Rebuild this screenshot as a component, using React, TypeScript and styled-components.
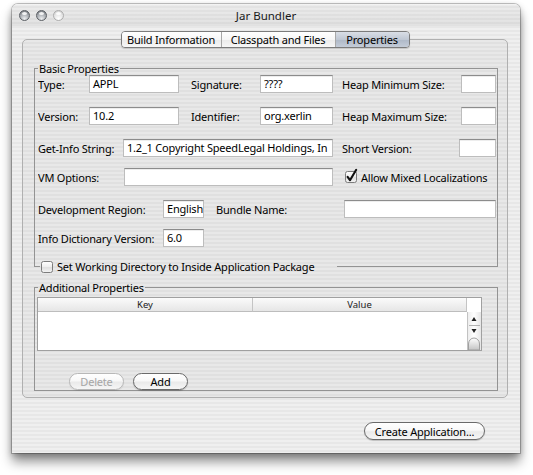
import React from "react";
import styled, { createGlobalStyle } from "styled-components";

const LINE = "#939393";
const PIN =
  "repeating-linear-gradient(180deg, #efefef 0px, #efefef 2px, #e7e7e7 2px, #e7e7e7 4px)";

const GlobalStyle = createGlobalStyle`
  html, body { margin: 0; padding: 0; background: #ffffff; }
  body {
    font-family: "Noto Sans", "DejaVu Sans", sans-serif;
    font-size: 11px;
    letter-spacing: -0.2px;
    color: #000;
  }
  *, *::before, *::after { box-sizing: border-box; }
`;

const Stage = styled.div`
  width: 533px;
  height: 475px;
  padding: 4px 13px 0 12px;
  overflow: hidden;
`;

const Window = styled.div`
  width: 508px;
  height: 449px;
  display: flex;
  flex-direction: column;
  background: ${PIN};
  border-radius: 6px 6px 0 0;
  box-shadow: 0 0 0 1px rgba(0, 0, 0, 0.22), 0 9px 12px rgba(0, 0, 0, 0.42),
    0 2px 6px rgba(0, 0, 0, 0.25);
`;

const TitleBar = styled.div`
  height: 22px;
  display: grid;
  grid-template-columns: 1fr auto 1fr;
  align-items: center;
  padding: 0 7px;
  border-radius: 6px 6px 0 0;
  background: linear-gradient(180deg, rgba(255, 255, 255, 0.7) 0, rgba(255, 255, 255, 0) 1px),
    linear-gradient(180deg, rgba(0, 0, 0, 0.01), rgba(0, 0, 0, 0.06)), ${PIN};
`;

const Lights = styled.div`
  display: flex;
  gap: 6px;
`;

const Light = styled.span<{ $dim?: boolean }>`
  position: relative;
  width: 11px;
  height: 11px;
  border-radius: 50%;
  border: 1px solid ${(p) => (p.$dim ? "#adadad" : "#5c6065")};
  background: ${(p) =>
    p.$dim
      ? "radial-gradient(circle at 50% 85%, #ffffff 0, #e2e2e2 60%, #cfcfcf 100%)"
      : "radial-gradient(circle at 50% 85%, #eceef0 0, #a6aaaf 55%, #6c7075 100%)"};
  &::after {
    content: "";
    position: absolute;
    left: 2px;
    top: 1px;
    width: 5px;
    height: 3px;
    border-radius: 50%;
    background: rgba(255, 255, 255, 0.85);
  }
`;

const Title = styled.div`
  font-size: 11.5px;
  letter-spacing: 0;
  color: #1a1a1a;
  text-align: center;
`;

const Content = styled.div`
  flex: 1;
  display: flex;
  flex-direction: column;
  padding: 5px 12px 0 10px;
`;

const Tabs = styled.div`
  align-self: center;
  position: relative;
  z-index: 1;
  display: flex;
  height: 17px;
  border: 1px solid #7b7b7b;
  border-radius: 4px;
  overflow: hidden;
  box-shadow: 0 1px 1px rgba(0, 0, 0, 0.15);
`;

const Tab = styled.div<{ $w: number; $active?: boolean }>`
  width: ${(p) => p.$w}px;
  display: flex;
  align-items: center;
  justify-content: center;
  white-space: nowrap;
  border-left: 1px solid #a8a8a8;
  &:first-child {
    border-left: none;
  }
  background: ${(p) =>
    p.$active
      ? "linear-gradient(180deg, #d9dee6 0%, #bfc7d3 50%, #aeb8c7 51%, #c4ccd8 100%)"
      : "linear-gradient(180deg, #ffffff 0%, #f6f6f6 50%, #ebebeb 51%, #f7f7f7 100%)"};
`;

const Panel = styled.div`
  margin-top: -9px;
  height: 359px;
  border: 1px solid #b0b0b0;
  border-radius: 5px;
  background: rgba(0, 0, 0, 0.028);
  padding: 22px 9px 0 11px;
  display: flex;
  flex-direction: column;
`;

const Group = styled.div<{ $mt?: number }>`
  display: flex;
  flex-direction: column;
  margin-top: ${(p) => p.$mt ?? 0}px;
`;

const GroupHead = styled.div`
  display: flex;
  height: 13px;
  line-height: 13px;
`;

const HeadCapStart = styled.span`
  width: 4px;
  height: 7px;
  align-self: flex-end;
  border-left: 1px solid ${LINE};
  border-top: 1px solid ${LINE};
`;

const HeadTitle = styled.span`
  padding: 0 1px;
  white-space: nowrap;
`;

const HeadCapEnd = styled.span`
  flex: 1;
  height: 7px;
  align-self: flex-end;
  border-right: 1px solid ${LINE};
  border-top: 1px solid ${LINE};
`;

const GroupBody = styled.div<{ $closed?: boolean; $pl: number; $pb: number }>`
  display: flex;
  flex-direction: column;
  border-left: 1px solid ${LINE};
  border-right: 1px solid ${LINE};
  border-bottom: ${(p) => (p.$closed ? `1px solid ${LINE}` : "none")};
  padding-left: ${(p) => p.$pl}px;
  padding-bottom: ${(p) => p.$pb}px;
`;

const GroupFoot = styled.div`
  display: flex;
  align-items: center;
  height: 13px;
`;

const FootCapStart = styled.span`
  width: 6px;
  height: 7px;
  align-self: flex-start;
  border-left: 1px solid ${LINE};
  border-bottom: 1px solid ${LINE};
`;

const FootCapEnd = styled.span`
  flex: 1;
  height: 7px;
  align-self: flex-start;
  border-right: 1px solid ${LINE};
  border-bottom: 1px solid ${LINE};
`;

const Row = styled.div<{ $mt?: number }>`
  display: flex;
  align-items: center;
  height: 18px;
  margin-top: ${(p) => p.$mt ?? 0}px;
`;

const Label = styled.span<{ $w?: number; $ml?: number }>`
  flex-shrink: 0;
  white-space: nowrap;
  width: ${(p) => (p.$w ? `${p.$w}px` : "auto")};
  margin-left: ${(p) => p.$ml ?? 0}px;
  overflow: hidden;
`;

const TextBox = styled.div<{ $w: number }>`
  flex-shrink: 0;
  width: ${(p) => p.$w}px;
  height: 18px;
  background: #ffffff;
  border: 1px solid #bdbdbd;
  border-top-color: #8c8c8c;
  box-shadow: inset 0 1px 0 rgba(0, 0, 0, 0.07);
  padding: 0 3px;
  line-height: 16px;
  white-space: nowrap;
  overflow: hidden;
`;

const CheckSvg = styled.svg<{ $ml?: number }>`
  flex-shrink: 0;
  overflow: visible;
  margin-left: ${(p) => p.$ml ?? 0}px;
`;

const CheckLabel = styled.span<{ $w?: number }>`
  margin-left: 4px;
  white-space: nowrap;
  width: ${(p) => (p.$w ? `${p.$w}px` : "auto")};
  flex-shrink: 0;
`;

const Table = styled.div`
  margin-top: 3px;
  width: 445px;
  height: 54px;
  border: 1px solid #a0a0a0;
  background: #ffffff;
  display: grid;
  grid-template-columns: 215px 214px 14px;
  grid-template-rows: 14px 1fr;
`;

const HeadCell = styled.div`
  display: flex;
  align-items: center;
  justify-content: center;
  font-size: 9.5px;
  letter-spacing: 0;
  color: #222;
  background: linear-gradient(180deg, #fbfbfb 0%, #f0f0f0 50%, #e6e6e6 100%);
  border-bottom: 1px solid #bdbdbd;
  border-right: 1px solid #c4c4c4;
`;

const CornerCell = styled.div`
  background: #ffffff;
`;

const BodyCell = styled.div`
  background: #ffffff;
`;

const ButtonRow = styled.div`
  display: flex;
  gap: 9px;
  margin-top: 22px;
  padding-left: 32px;
`;

const AquaButton = styled.div<{ $w: number; $h?: number; $disabled?: boolean }>`
  width: ${(p) => p.$w}px;
  height: ${(p) => p.$h ?? 17}px;
  border-radius: 10px;
  display: flex;
  align-items: center;
  justify-content: center;
  white-space: nowrap;
  border: 1px solid ${(p) => (p.$disabled ? "#b8b8b8" : "#6a6a6a")};
  color: ${(p) => (p.$disabled ? "#a6a6a6" : "#000000")};
  background: linear-gradient(180deg, #ffffff 0%, #f8f8f8 45%, #eaeaea 55%, #f6f6f6 100%);
  box-shadow: 0 1px 1px rgba(0, 0, 0, ${(p) => (p.$disabled ? 0.08 : 0.2)});
`;

const Footer = styled.div`
  display: flex;
  justify-content: flex-end;
  margin-top: 24px;
  padding-right: 23px;
`;

function CheckBox({ checked, ml }: { checked?: boolean; ml?: number }) {
  const id = checked ? "cbg-on" : "cbg-off";
  return (
    <CheckSvg width="12" height="12" viewBox="0 0 12 12" $ml={ml}>
      <defs>
        <linearGradient id={id} x1="0" y1="0" x2="0" y2="1">
          <stop offset="0" stopColor="#ffffff" />
          <stop offset="0.5" stopColor="#eeeeee" />
          <stop offset="0.55" stopColor="#e0e0e0" />
          <stop offset="1" stopColor="#f4f4f4" />
        </linearGradient>
      </defs>
      <rect x="0.5" y="0.5" width="11" height="11" rx="2" fill={`url(#${id})`} stroke="#7c7c7c" />
      {checked && (
        <path
          d="M2.6 5.8 L5 9.2 L11.2 -1.2"
          stroke="#111"
          strokeWidth="2.1"
          fill="none"
          strokeLinecap="round"
          strokeLinejoin="round"
        />
      )}
    </CheckSvg>
  );
}

function ScrollBar() {
  return (
    <svg width="14" height="38" viewBox="0 0 14 38">
      <defs>
        <linearGradient id="sbg" x1="0" y1="0" x2="1" y2="0">
          <stop offset="0" stopColor="#eaeaea" />
          <stop offset="0.5" stopColor="#ffffff" />
          <stop offset="1" stopColor="#e6e6e6" />
        </linearGradient>
        <linearGradient id="thumb" x1="0" y1="0" x2="0" y2="1">
          <stop offset="0" stopColor="#ffffff" />
          <stop offset="1" stopColor="#c4c4c4" />
        </linearGradient>
      </defs>
      <rect x="0" y="0" width="14" height="38" fill="url(#sbg)" />
      <line x1="0.5" y1="0" x2="0.5" y2="38" stroke="#c2c2c2" />
      <path d="M4.5 9 L7 5 L9.5 9 Z" fill="#222" />
      <line x1="2" y1="13.5" x2="13" y2="13.5" stroke="#b4b4b4" />
      <path d="M4.5 17 L9.5 17 L7 21 Z" fill="#222" />
      <path d="M1.5 38 L1.5 32 A5.5 6 0 0 1 12.5 32 L12.5 38 Z" fill="url(#thumb)" stroke="#a0a0a0" />
    </svg>
  );
}

export default function App() {
  return (
    <>
      <GlobalStyle />
      <Stage>
        <Window>
          <TitleBar>
            <Lights>
              <Light />
              <Light />
              <Light $dim />
            </Lights>
            <Title>Jar Bundler</Title>
            <span />
          </TitleBar>
          <Content>
            <Tabs>
              <Tab $w={99}>Build Information</Tab>
              <Tab $w={114}>Classpath and Files</Tab>
              <Tab $w={74} $active>
                Properties
              </Tab>
            </Tabs>
            <Panel>
              <Group>
                <GroupHead>
                  <HeadCapStart />
                  <HeadTitle>Basic Properties</HeadTitle>
                  <HeadCapEnd />
                </GroupHead>
                <GroupBody $pl={3} $pb={13}>
                  <Row>
                    <Label $w={51}>Type:</Label>
                    <TextBox $w={90}>APPL</TextBox>
                    <Label $ml={12} $w={69}>
                      Signature:
                    </Label>
                    <TextBox $w={73}>????</TextBox>
                    <Label $ml={9} $w={119}>
                      Heap Minimum Size:
                    </Label>
                    <TextBox $w={35} />
                  </Row>
                  <Row $mt={14}>
                    <Label $w={51}>Version:</Label>
                    <TextBox $w={90}>10.2</TextBox>
                    <Label $ml={12} $w={69}>
                      Identifier:
                    </Label>
                    <TextBox $w={73}>org.xerlin</TextBox>
                    <Label $ml={9} $w={119}>
                      Heap Maximum Size:
                    </Label>
                    <TextBox $w={35} />
                  </Row>
                  <Row $mt={14}>
                    <Label $w={85}>Get-Info String:</Label>
                    <TextBox $w={210}>1.2_1 Copyright SpeedLegal Holdings, In</TextBox>
                    <Label $ml={9} $w={117}>
                      Short Version:
                    </Label>
                    <TextBox $w={37} />
                  </Row>
                  <Row $mt={11}>
                    <Label $w={86}>VM Options:</Label>
                    <TextBox $w={209} />
                    <CheckBox checked ml={12} />
                    <CheckLabel>Allow Mixed Localizations</CheckLabel>
                  </Row>
                  <Row $mt={14}>
                    <Label $w={125}>Development Region:</Label>
                    <TextBox $w={41}>English</TextBox>
                    <Label $ml={12} $w={128}>
                      Bundle Name:
                    </Label>
                    <TextBox $w={152} />
                  </Row>
                  <Row $mt={11}>
                    <Label $w={125}>Info Dictionary Version:</Label>
                    <TextBox $w={41}>6.0</TextBox>
                  </Row>
                </GroupBody>
                <GroupFoot>
                  <FootCapStart />
                  <CheckBox ml={1} />
                  <CheckLabel $w={280}>Set Working Directory to Inside Application Package</CheckLabel>
                  <FootCapEnd />
                </GroupFoot>
              </Group>

              <Group $mt={8}>
                <GroupHead>
                  <HeadCapStart />
                  <HeadTitle>Additional Properties</HeadTitle>
                  <HeadCapEnd />
                </GroupHead>
                <GroupBody $pl={2} $pb={0} $closed>
                  <Table>
                    <HeadCell>Key</HeadCell>
                    <HeadCell>Value</HeadCell>
                    <CornerCell />
                    <BodyCell />
                    <BodyCell />
                    <ScrollBar />
                  </Table>
                  <ButtonRow>
                    <AquaButton $w={55} $disabled>
                      Delete
                    </AquaButton>
                    <AquaButton $w={55}>Add</AquaButton>
                  </ButtonRow>
                </GroupBody>
              </Group>
            </Panel>
            <Footer>
              <AquaButton $w={121} $h={18}>
                Create Application...
              </AquaButton>
            </Footer>
          </Content>
        </Window>
      </Stage>
    </>
  );
}
